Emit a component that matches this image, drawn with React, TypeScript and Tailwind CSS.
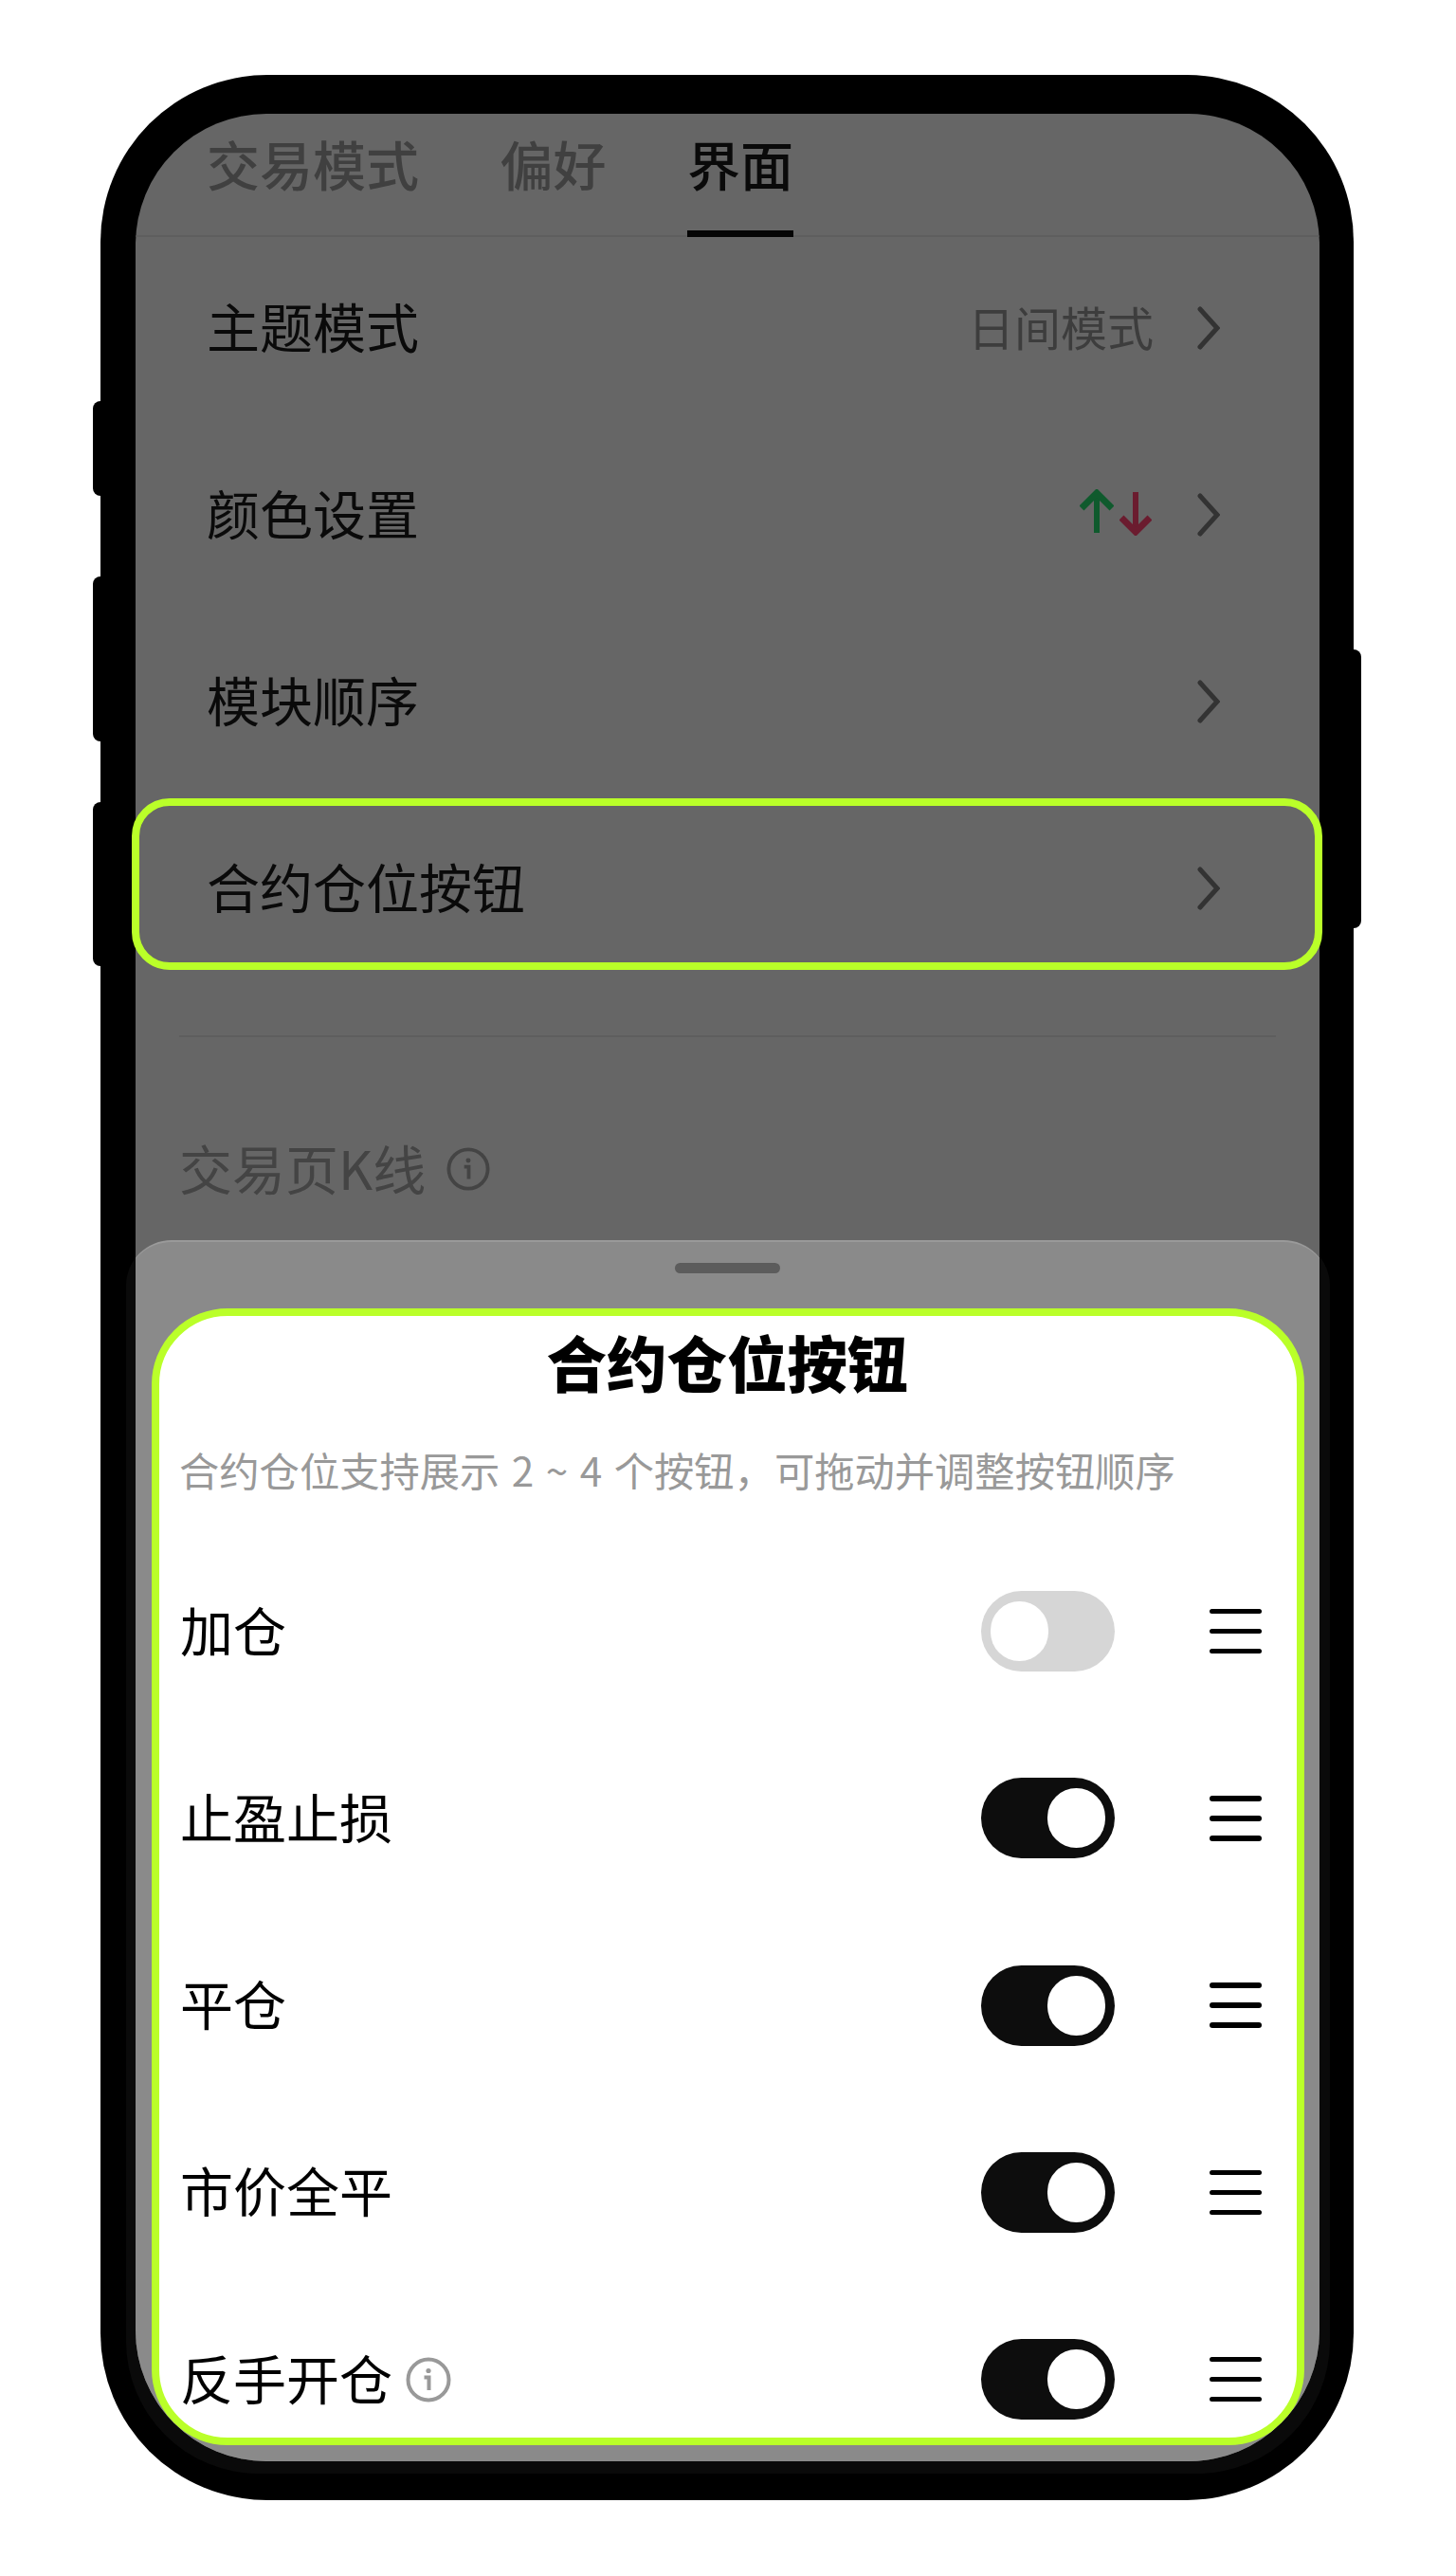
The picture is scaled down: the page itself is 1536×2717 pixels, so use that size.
import React from 'react';

const Chevron: React.FC = () => (
     <svg width="24" height="46" viewBox="0 0 24 46" fill="none" stroke="#333333" strokeWidth="5" strokeLinecap="round" strokeLinejoin="miter">
          <path d="M3 3 L21 23 L3 43" />
     </svg>
);

const InfoIcon: React.FC<{ size: number; color: string }> = ({ size, color }) => (
     <svg width={size} height={size} viewBox="0 0 48 48" fill="none">
          <circle cx="24" cy="24" r="21.5" stroke={color} strokeWidth="4" />
          <circle cx="24" cy="14.5" r="2.6" fill={color} />
          <path d="M19.5 21.5 H24.5 V35" stroke={color} strokeWidth="4" />
     </svg>
);

const UpDownArrows: React.FC = () => (
     <div className="flex items-start gap-[6px] pb-[5px]">
          <svg width="36" height="46" viewBox="0 0 36 46" fill="none" stroke="#0f5a2d" strokeWidth="6">
               <path d="M18 46 V4" />
               <path d="M2 20 L18 4 L34 20" strokeWidth="7" />
          </svg>
          <svg width="34" height="46" viewBox="0 0 34 46" fill="none" stroke="#6b1c2f" strokeWidth="6" className="mt-[3px]">
               <path d="M17 0 V42" />
               <path d="M2 27 L17 42 L32 27" strokeWidth="7" />
          </svg>
     </div>
);

const Toggle: React.FC<{ on: boolean }> = ({ on }) => (
     <div className={on ? 'flex h-[85px] w-[141px] items-center justify-end rounded-full bg-[#0d0d0d] px-[10px]' : 'flex h-[85px] w-[141px] items-center justify-start rounded-full bg-[#d6d6d6] px-[10px]'}>
          <div className="h-[63px] w-[61px] rounded-full bg-white" />
     </div>
);

const DragHandle: React.FC = () => (
     <div className="flex w-[55px] flex-col gap-[15.5px]">
          <div className="h-[5.5px] rounded-full bg-black" />
          <div className="h-[5.5px] rounded-full bg-black" />
          <div className="h-[5.5px] rounded-full bg-black" />
     </div>
);

const settingRows = [
     { label: '主题模式', value: '日间模式' },
     { label: '颜色设置', arrows: true },
     { label: '模块顺序' },
     { label: '合约仓位按钮' },
];

const positionButtons = [
     { label: '加仓', on: false },
     { label: '止盈止损', on: true },
     { label: '平仓', on: true },
     { label: '市价全平', on: true },
     { label: '反手开仓', on: true, info: true },
];

export default function App() {
     return (
          <div className="h-[2717px] w-[1536px] overflow-hidden bg-white pl-[106px] pt-[79px] font-['Noto_Sans_CJK_SC',sans-serif]">
               <div className="relative h-[2558px] w-[1322px] rounded-[176px] bg-black pl-[37px] pt-[41px]">
                    {/* side buttons */}
                    <div className="absolute left-[-8px] top-[344px] h-[100px] w-[8px] rounded-l-[8px] bg-black" />
                    <div className="absolute left-[-8px] top-[529px] h-[174px] w-[8px] rounded-l-[8px] bg-black" />
                    <div className="absolute left-[-8px] top-[767px] h-[173px] w-[8px] rounded-l-[8px] bg-black" />
                    <div className="absolute right-[-8px] top-[606px] h-[294px] w-[8px] rounded-r-[8px] bg-black" />

                    {/* sheet edge showing on the bezel */}
                    <div className="absolute bottom-[28px] left-[27px] right-[25px] top-[1229px] rounded-b-[140px] rounded-t-[48px] bg-[#0a0a0a]" />

                    <div className="relative h-[2476px] w-[1249px] overflow-hidden rounded-[138px] bg-[#666666]">
                         <div className="flex h-[130px] gap-[85.5px] border-b-2 border-[#5e5e5e] pl-[75px] text-[56px] font-medium">
                              <div className="-mb-[2px] flex items-center border-b-[7px] border-transparent pb-[20px] text-[#404040]">交易模式</div>
                              <div className="-mb-[2px] flex items-center border-b-[7px] border-transparent pb-[20px] text-[#404040]">偏好</div>
                              <div className="-mb-[2px] flex items-center border-b-[7px] border-[#050505] pb-[20px] text-[#0a0a0a]">界面</div>
                         </div>

                         <div className="-mt-[3px]">
                              {settingRows.map((row) => (
                                   <div key={row.label} className="flex h-[197.25px] items-center justify-between pl-[75px] pr-[105px]">
                                        <span className="pb-[6px] text-[56px] text-[#0a0a0a]">{row.label}</span>
                                        <div className="flex items-center">
                                             {row.value && <span className="mr-[46px] pb-[4px] text-[49px] text-[#3d3d3d]">{row.value}</span>}
                                             {row.arrows && <div className="mr-[48px]"><UpDownArrows /></div>}
                                             <Chevron />
                                        </div>
                                   </div>
                              ))}
                         </div>

                         <div className="mx-[46px] mt-[56px] h-[2px] bg-[#5e5e5e]" />

                         <div className="mt-[93px] flex h-[92px] items-center gap-[22px] pl-[46px] text-[56px] text-[#444444]">
                              <span className="pb-[4px]">交易页K线</span>
                              <InfoIcon size={46} color="#444444" />
                         </div>

                         <div className="-mx-[10px] mt-[29px] h-[1288px] rounded-t-[48px] border-t-2 border-[#9a9a9a] bg-[#8a8a8a]">
                              <div className="mx-auto mt-[22px] h-[11px] w-[111px] rounded-full bg-[#5c5c5c]" />
                              <div className="ml-[27px] mt-[37px] h-[1199px] w-[1216px] overflow-hidden rounded-[80px] border-[8px] border-[#baff29] bg-white">
                                   <div className="flex h-[102px] items-center justify-center pb-[6px] pr-[2px] text-[63.5px] font-black text-black">合约仓位按钮</div>
                                   <div className="flex h-[132px] items-center pb-[12px] pl-[21px] text-[42.3px] text-[#999999] [word-spacing:3px]">合约仓位支持展示 2 ~ 4 个按钮，可拖动并调整按钮顺序</div>
                                   {positionButtons.map((item) => (
                                        <div key={item.label} className="flex h-[197.25px] items-center justify-between pl-[22px] pr-[37px]">
                                             <div className="flex items-center gap-[14px] text-[56px] text-black">
                                                  <span className="pb-[6px]">{item.label}</span>
                                                  {item.info && <InfoIcon size={48} color="#999999" />}
                                             </div>
                                             <div className="flex items-center gap-[100px]">
                                                  <Toggle on={item.on} />
                                                  <DragHandle />
                                             </div>
                                        </div>
                                   ))}
                              </div>
                         </div>
                    </div>

                    {/* highlight over the row */}
                    <div className="absolute left-[33px] top-[763px] h-[181px] w-[1256px] rounded-[40px] border-[8px] border-[#baff29]" />
               </div>
          </div>
     );
}
